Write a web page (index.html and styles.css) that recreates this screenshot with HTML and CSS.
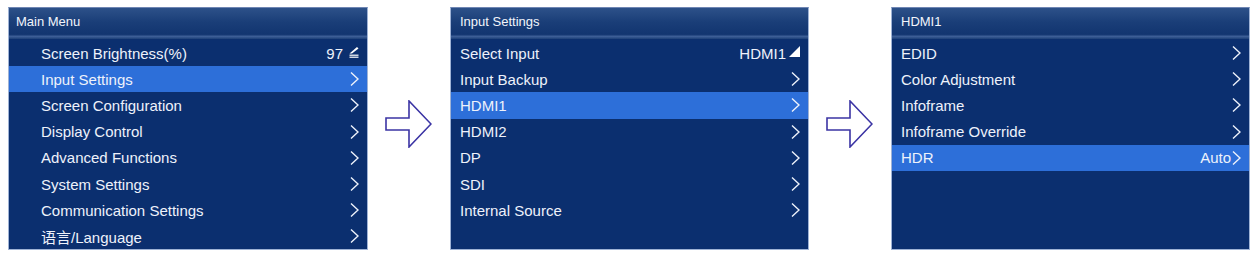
FILE: index.html
```html
<!DOCTYPE html>
<html lang="en">
<head>
  <meta charset="UTF-8">
  <title>Menu Navigation</title>
  <link rel="stylesheet" href="styles.css">
</head>
<body>

  <div class="flow">

    <!-- Main Menu -->
    <div class="panel panel-main">
      <div class="panel-header">Main Menu</div>
      <ul class="menu">
        <li><span>Screen Brightness(%)</span><span class="value">97
          <svg class="edit" width="10" height="12" viewBox="0 0 10 12"><polygon points="0.5,7.5 8,1 9.5,2.6 3,7.5" fill="#fff"/><rect x="0.5" y="8.6" width="9" height="1.2" fill="#fff"/><rect x="0.5" y="10.6" width="9" height="1.2" fill="#fff"/></svg></span></li>
        <li class="active"><span>Input Settings</span><span class="chev"></span></li>
        <li><span>Screen Configuration</span><span class="chev"></span></li>
        <li><span>Display Control</span><span class="chev"></span></li>
        <li><span>Advanced Functions</span><span class="chev"></span></li>
        <li><span>System Settings</span><span class="chev"></span></li>
        <li><span>Communication Settings</span><span class="chev"></span></li>
        <li><span>语言/Language</span><span class="chev"></span></li>
      </ul>
    </div>

    <svg class="arrow" width="47" height="48" viewBox="0 0 47 48">
      <path d="M1 18 H24 V1 L46 24 L24 47 V30 H1 Z" fill="none" stroke="#3b34a4" stroke-width="1.6" stroke-linejoin="miter"/>
    </svg>

    <!-- Input Settings -->
    <div class="panel">
      <div class="panel-header">Input Settings</div>
      <ul class="menu">
        <li><span>Select Input</span><span class="value">HDMI1
          <svg class="corner" width="11" height="11" viewBox="0 0 11 11"><polygon points="11,0 11,11 0,11" fill="#fff"/></svg></span></li>
        <li><span>Input Backup</span><span class="chev"></span></li>
        <li class="active"><span>HDMI1</span><span class="chev"></span></li>
        <li><span>HDMI2</span><span class="chev"></span></li>
        <li><span>DP</span><span class="chev"></span></li>
        <li><span>SDI</span><span class="chev"></span></li>
        <li><span>Internal Source</span><span class="chev"></span></li>
      </ul>
    </div>

    <svg class="arrow" width="47" height="48" viewBox="0 0 47 48">
      <path d="M1 18 H24 V1 L46 24 L24 47 V30 H1 Z" fill="none" stroke="#3b34a4" stroke-width="1.6" stroke-linejoin="miter"/>
    </svg>

    <!-- HDMI1 -->
    <div class="panel">
      <div class="panel-header">HDMI1</div>
      <ul class="menu">
        <li><span>EDID</span><span class="chev"></span></li>
        <li><span>Color Adjustment</span><span class="chev"></span></li>
        <li><span>Infoframe</span><span class="chev"></span></li>
        <li><span>Infoframe Override</span><span class="chev"></span></li>
        <li class="active"><span>HDR</span><span class="value tight">Auto<span class="chev"></span></span></li>
      </ul>
    </div>

  </div>

</body>
</html>
```

FILE: styles.css
```css
/* General Styles */
* {
  margin: 0;
  padding: 0;
  box-sizing: border-box;
}

body {
  font-family: "Liberation Sans", Arial, "Noto Sans CJK SC", sans-serif;
  background-color: #fff;
  color: #eef2fb;
}

/* Layout */
.flow {
  display: flex;
  align-items: flex-start;
  padding: 7px 0 0 8px;
}

.arrow {
  margin: 93px 18px 0 17px;
  flex-shrink: 0;
}

/* Panels */
.panel {
  width: 359px;
  height: 243px;
  background-color: #0b2f6f;
  border: 1px solid #9fb3d6;
  border-top-color: #6f86b3;
}

.panel-main {
  width: 360px;
}

.panel-header {
  height: 31px;
  padding-left: 9px;
  font-size: 13px;
  line-height: 28px;
  color: #f2f5fb;
  background: linear-gradient(#2d5189 0%, #1a3e78 45%, #123570 85%, #3d5e96 92%, #1c3f77 100%);
}

.panel-main .panel-header {
  padding-left: 7px;
}

/* Menu rows */
.menu {
  list-style-type: none;
  padding-top: 1px;
}

.menu li {
  display: flex;
  justify-content: space-between;
  align-items: center;
  height: 26.2px;
  padding: 0 8px 0 9px;
  font-size: 15px;
}

.panel-main .menu li {
  padding-left: 32px;
}

.menu li.active {
  background-color: #2d6fd9;
}

.value {
  display: flex;
  align-items: center;
  gap: 3px;
}

.value .edit {
  margin-left: 3px;
  margin-top: -3px;
}

.value .corner {
  margin-top: -3px;
}

.value.tight {
  gap: 1px;
}

/* Chevron */
.chev {
  width: 9px;
  height: 16px;
  background: url("data:image/svg+xml,%3Csvg xmlns='http://www.w3.org/2000/svg' width='9' height='16' viewBox='0 0 9 16'%3E%3Cpolyline points='1,1.5 8,8 1,14.5' fill='none' stroke='%23eef2fb' stroke-width='1.4'/%3E%3C/svg%3E") no-repeat center;
}
```
